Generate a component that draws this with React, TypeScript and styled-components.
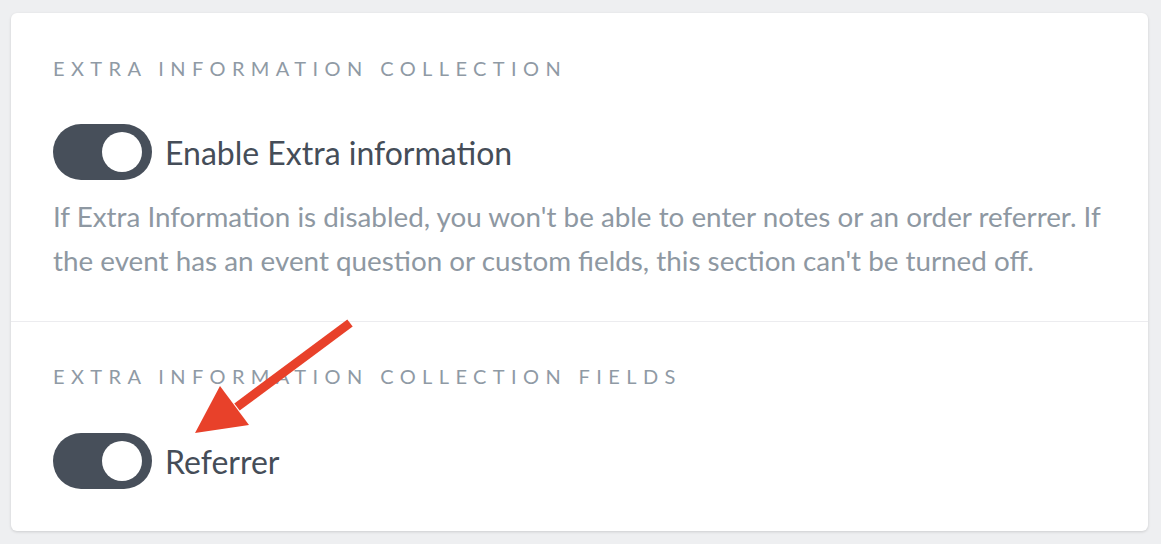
import styled, { createGlobalStyle } from "styled-components";

const GlobalStyle = createGlobalStyle`
  body {
    margin: 0;
    background-color: #eeeff1;
    font-family: Lato, "Open Sans", sans-serif;
  }
`;

const Page = styled.div`
  padding: 13px 13px 13px 11px;
`;

const Card = styled.div`
  position: relative;
  background-color: white;
  border-radius: 6px;
  box-shadow: 0 1px 3px rgba(0, 0, 0, 0.14);
`;

const Section = styled.section<{ $top: number; $bottom: number; $divider?: boolean }>`
  padding: ${({ $top, $bottom }) => `${$top}px 42px ${$bottom}px`};
  border-top: ${({ $divider }) => ($divider ? "1px solid #ececef" : "none")};
`;

const Heading = styled.h2`
  margin: 0;
  font-size: 20px;
  line-height: 24px;
  font-weight: 400;
  letter-spacing: 6.4px;
  color: #8f9aa5;
  text-transform: uppercase;
`;

const ToggleRow = styled.label<{ $gap: number }>`
  display: flex;
  align-items: center;
  gap: 13px;
  margin-top: ${({ $gap }) => $gap}px;
`;

const Track = styled.span`
  display: inline-flex;
  align-items: center;
  justify-content: flex-end;
  box-sizing: border-box;
  width: 99px;
  height: 56px;
  padding: 0 10px;
  border-radius: 28px;
  background-color: #474f5a;
`;

const Knob = styled.span`
  width: 40px;
  height: 40px;
  border-radius: 50%;
  background-color: white;
`;

const ToggleLabel = styled.span`
  font-size: 32px;
  color: #454d58;
`;

const Help = styled.p`
  margin: 15px 0 0;
  font-size: 27.8px;
  line-height: 44px;
  color: #8e98a2;
`;

const Arrow = styled.svg`
  position: absolute;
  left: 0;
  top: 0;
  pointer-events: none;
`;

function Toggle({ label, gap }: { label: string; gap: number }) {
  return (
    <ToggleRow $gap={gap}>
      <Track>
        <Knob />
      </Track>
      <ToggleLabel>{label}</ToggleLabel>
    </ToggleRow>
  );
}

function App() {
  return (
    <Page>
      <GlobalStyle />
      <Card>
        <Section $top={43} $bottom={38}>
          <Heading>Extra Information Collection</Heading>
          <Toggle label="Enable Extra information" gap={44} />
          <Help>
            If Extra Information is disabled, you won't be able to enter notes or an order
            referrer. If the event has an event question or custom fields, this section can't be
            turned off.
          </Help>
        </Section>
        <Section $top={42} $bottom={42} $divider>
          <Heading>Extra Information Collection Fields</Heading>
          <Toggle label="Referrer" gap={45} />
        </Section>
        <Arrow width="400" height="450" viewBox="0 0 400 450">
          <line x1="339" y1="310" x2="226" y2="394" stroke="#e8412a" strokeWidth="9" />
          <polygon points="184,420 209,373 238,412" fill="#e8412a" />
        </Arrow>
      </Card>
    </Page>
  );
}

export default App;
